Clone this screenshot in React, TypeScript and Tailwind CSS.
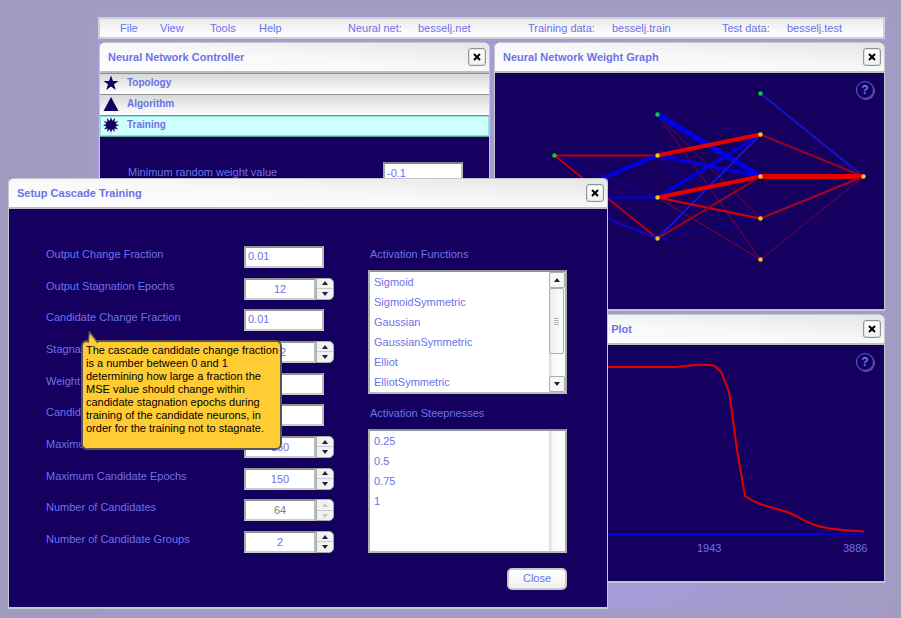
import type { ReactNode } from "react";

function CloseButton({ label }: { label: string }) {
  return (
    <button
      type="button"
      aria-label={label}
      className="flex size-[18px] shrink-0 items-center justify-center rounded-[3px] border border-[#8f9797] bg-gradient-to-b from-white to-[#f0f0f0] shadow-[inset_0_0_0_1px_#dfe3e3]"
    >
      <svg viewBox="0 0 8 8" className="size-2" stroke="#000" strokeWidth="2" fill="none">
        <path d="M1 1 L7 7 M7 1 L1 7" />
      </svg>
    </button>
  );
}

function Panel({
  title,
  children,
  className = "",
}: {
  title: string;
  children: ReactNode;
  className?: string;
}) {
  return (
    <section
      className={`flex flex-col rounded-t border-x border-b-2 border-[#c3c8cc] bg-[#150060] ${className}`}
    >
      <header className="flex h-[31px] shrink-0 items-center justify-between rounded-t border-t border-b-2 border-t-[#c3c8cc] border-b-[#b9c0c4] bg-gradient-to-bl from-[#e6e6e6] via-[#f8f8f8] to-white pr-[3px] pl-2">
        <h2 className="text-[11px] leading-4 font-bold text-[#6b73e8]">{title}</h2>
        <CloseButton label={`Close ${title}`} />
      </header>
      {children}
    </section>
  );
}

function HelpButton() {
  return (
    <button
      type="button"
      aria-label="Help"
      className="absolute top-2 right-[10px] flex size-[18px] items-center justify-center rounded-full border border-[#5a63d8] text-xs leading-4 font-bold text-[#6b7bf0] shadow-[1px_1px_0_#5a5a80]"
    >
      ?
    </button>
  );
}

const sections = [
  {
    name: "Topology",
    icon: "M8 0.5 L10 6 L15.5 6 L11 9.3 L12.8 15 L8 11.5 L3.2 15 L5 9.3 L0.5 6 L6 6 Z",
    active: false,
  },
  { name: "Algorithm", icon: "M8 1 L15.5 15 L0.5 15 Z", active: false },
  {
    name: "Training",
    icon: "M8 0 L9.2 4 L12 1.1 L11.5 5 L15.2 4 L12.5 7 L16 8.2 L12.5 9.4 L15 12.4 L11.3 11.4 L11.8 15 L9.2 12.3 L8 16 L6.8 12.3 L4 15 L4.6 11.4 L0.8 12.4 L3.5 9.4 L0 8.2 L3.5 7 L0.8 4 L4.5 5 L4 1.1 L6.8 4 Z",
    active: true,
  },
];

function Controller() {
  return (
    <Panel title="Neural Network Controller">
      <nav>
        {sections.map((s) => (
          <button
            key={s.name}
            type="button"
            className={`flex h-[21px] w-full items-start gap-2 border-t pt-px pl-[3px] text-[10px] leading-4 font-bold text-[#6b73e8] ${
              s.active
                ? "border-[#5b9f8f] bg-[#cffffd] shadow-[inset_0_0_0_1px_#8fe0d8]"
                : "border-[#8b8f90] bg-gradient-to-b from-[#d6d9d9] to-white"
            }`}
          >
            <svg viewBox="0 0 16 16" className="size-4" fill="#150060">
              <path d={s.icon} />
            </svg>
            {s.name}
          </button>
        ))}
      </nav>
      <div className="flex items-start justify-between border-t border-[#5b9f8f] pt-[25px] pr-[26px] pl-[28px] text-[11px] leading-4 text-[#6b73e8]">
        <label htmlFor="min-weight" className="pt-0.5">
          Minimum random weight value
        </label>
        <input
          id="min-weight"
          defaultValue="-0.1"
          className="h-[22px] w-20 border-2 border-t-[#7f8584] border-r-[#b9bdbd] border-b-[#c9cdcd] border-l-[#a5abab] bg-white px-0.5"
        />
      </div>
    </Panel>
  );
}

type Edge = [number, number, number, number, string, number];

const edges: Edge[] = [
  [554, 155, 657, 197, "#0b06a8", 1],
  [657, 114, 760, 134, "#160290", 1],
  [657, 155, 760, 218, "#160290", 1],
  [657, 155, 760, 259, "#160290", 1],
  [657, 238, 760, 218, "#0c04a8", 1],
  [657, 238, 760, 259, "#160290", 1],
  [657, 114, 760, 218, "#72063c", 1],
  [657, 114, 760, 259, "#7a0638", 1],
  [657, 197, 760, 259, "#8a0430", 1],
  [760, 259, 863, 176, "#6c0844", 1],
  [554, 155, 657, 155, "#b50018", 2],
  [554, 155, 657, 238, "#b50018", 2],
  [554, 197, 657, 155, "#0000e8", 4],
  [554, 197, 657, 197, "#0000e8", 2],
  [554, 197, 657, 238, "#0a08c8", 2],
  [657, 114, 760, 176, "#0000e8", 5],
  [657, 155, 760, 176, "#0000e8", 3],
  [657, 197, 760, 134, "#0000e8", 3],
  [657, 238, 760, 134, "#1414d0", 2],
  [657, 155, 760, 134, "#e60000", 4],
  [657, 197, 760, 176, "#e60000", 4],
  [657, 197, 760, 218, "#d80008", 2],
  [657, 238, 760, 176, "#a8001c", 2],
  [760, 93, 863, 176, "#1414c8", 2],
  [760, 134, 863, 176, "#96002a", 2],
  [760, 176, 863, 176, "#e60000", 5],
  [760, 218, 863, 176, "#a80020", 2],
];

const nodes: [number, number, string][] = [
  [554, 155, "#00d820"],
  [657, 114, "#00d820"],
  [760, 93, "#00d820"],
  [657, 155, "#e8c820"],
  [657, 197, "#e8c820"],
  [657, 238, "#e8c820"],
  [760, 134, "#e8c820"],
  [760, 176, "#e8c820"],
  [760, 218, "#e8c820"],
  [760, 259, "#e8c820"],
  [863, 176, "#e8c820"],
];

function WeightGraph() {
  return (
    <Panel title="Neural Network Weight Graph">
      <div className="relative">
        <svg viewBox="495 73 389 236" className="block w-full">
          <g transform="translate(0.5 0.5)">
            {edges.map(([x1, y1, x2, y2, stroke, w], i) => (
              <line key={i} x1={x1} y1={y1} x2={x2} y2={y2} stroke={stroke} strokeWidth={w} />
            ))}
            {nodes.map(([cx, cy, fill], i) => (
              <circle key={i} cx={cx} cy={cy} r="2.2" fill={fill} />
            ))}
          </g>
        </svg>
        <HelpButton />
      </div>
    </Panel>
  );
}

function ErrorPlot() {
  return (
    <Panel title="Mean Squared Error Plot">
      <div className="relative">
        <svg viewBox="495 345 389 236" className="block w-full">
          <path d="M520 534 H866" stroke="#0000d8" strokeWidth="2" />
          <path
            d="M520 367 H676 L690 365.5 Q705 364 714 365.5 L721 371.5 L729 392 L731 405 L737 450 L745 496 Q752 501 761 504.5 Q770 507 779 509.5 Q789 512 797 516.5 Q808 523 818 526 Q832 530 864 531.5"
            fill="none"
            stroke="#e00000"
            strokeWidth="2"
          />
          <g fill="#6b73e8" className="text-[11px]">
            <text x="697" y="552">
              1943
            </text>
            <text x="843" y="552">
              3886
            </text>
          </g>
        </svg>
        <HelpButton />
      </div>
    </Panel>
  );
}

function Arrow({ up, muted }: { up?: boolean; muted?: boolean }) {
  return (
    <svg viewBox="0 0 6 4" className="h-1 w-1.5" fill={muted ? "#c4c8c8" : "#1c2433"}>
      <path d={up ? "M3 0 L6 4 H0 Z" : "M0 0 H6 L3 4 Z"} />
    </svg>
  );
}

type Field = {
  id: string;
  label: string;
  value: string;
  stepper?: boolean;
  disabled?: boolean;
  tip?: boolean;
};

const fields: Field[] = [
  { id: "out-change", label: "Output Change Fraction", value: "0.01" },
  { id: "out-stagnation", label: "Output Stagnation Epochs", value: "12", stepper: true },
  { id: "cand-change", label: "Candidate Change Fraction", value: "0.01", tip: true },
  { id: "cand-stagnation", label: "Stagnation Epochs", value: "12", stepper: true },
  { id: "weight", label: "Weight Multiplier", value: "0.4" },
  { id: "cand-limit", label: "Candidate Limit", value: "1000" },
  { id: "max-out", label: "Maximum Out Epochs", value: "150", stepper: true },
  { id: "max-cand", label: "Maximum Candidate Epochs", value: "150", stepper: true },
  { id: "num-cand", label: "Number of Candidates", value: "64", stepper: true, disabled: true },
  { id: "num-groups", label: "Number of Candidate Groups", value: "2", stepper: true },
];

function Tip() {
  return (
    <div
      role="tooltip"
      className="absolute top-[31px] left-[35px] z-10 h-[110px] w-[201px] rounded-md border-2 border-[#565656] bg-[#ffcc33] px-[3px] pt-0.5 text-[11px] leading-[13px] whitespace-nowrap text-black"
    >
      <svg viewBox="0 0 12 12" className="absolute -top-[11px] left-1 h-3 w-3">
        <path d="M1 12 L2.5 1 L11 12" fill="#ffcc33" stroke="#565656" strokeWidth="1.5" />
      </svg>
      The cascade candidate change fraction
      <br />
      is a number between 0 and 1
      <br />
      determining how large a fraction the
      <br />
      MSE value should change within
      <br />
      candidate stagnation epochs during
      <br />
      training of the candidate neurons, in
      <br />
      order for the training not to stagnate.
    </div>
  );
}

function FieldRow({ field }: { field: Field }) {
  const { id, label, value, stepper, disabled, tip } = field;
  return (
    <div className="relative flex h-[22px] items-start">
      <label htmlFor={id} className="w-[198px]">
        {label}
      </label>
      <input
        id={id}
        defaultValue={value}
        disabled={disabled}
        className={`h-[22px] border-2 border-t-[#8f9594] border-r-[#b9bdbd] border-b-[#c9cdcd] border-l-[#a5abab] bg-white px-0.5 ${
          stepper ? "w-[72px] text-center" : "w-20 pb-0.5"
        } ${disabled ? "text-[#808080]" : ""}`}
      />
      {stepper && (
        <div className="flex h-[22px] w-[18px] flex-col overflow-hidden rounded-r-[5px] border border-[#a9afaf] bg-[#f2f2f2]">
          <button
            type="button"
            aria-label={`Increase ${label}`}
            disabled={disabled}
            className="flex flex-1 items-center justify-center border-b border-[#c9cdcd]"
          >
            <Arrow up muted={disabled} />
          </button>
          <button
            type="button"
            aria-label={`Decrease ${label}`}
            disabled={disabled}
            className="flex flex-1 items-center justify-center"
          >
            <Arrow muted={disabled} />
          </button>
        </div>
      )}
      {tip && <Tip />}
    </div>
  );
}

function ListBox({ title, items, scroll }: { title: string; items: string[]; scroll?: boolean }) {
  return (
    <div className="flex flex-col gap-2">
      <h3 className="pl-0.5">{title}</h3>
      <div className="flex h-[124px] border-2 border-t-[#8f9594] border-r-[#a9afaf] border-b-[#b9bdbd] border-l-[#a9afaf] bg-white">
        <ul role="listbox" aria-label={title} className="flex-1 overflow-hidden pl-1 leading-5">
          {items.map((item) => (
            <li key={item} role="option" aria-selected="false">
              {item}
            </li>
          ))}
        </ul>
        <div className="flex w-4 flex-col bg-gradient-to-r from-[#dadada] via-[#f8f8f8] via-25% to-white">
          {scroll && (
            <>
              <button
                type="button"
                aria-label="Scroll up"
                className="flex h-4 items-center justify-center rounded-[2px] border border-[#a9afaf] bg-[#f6f6f6]"
              >
                <Arrow up />
              </button>
              <div className="flex h-[66px] w-[15px] flex-col items-center justify-center gap-px rounded-[2px] border border-[#a9afaf] bg-gradient-to-r from-[#ececec] to-white">
                <span className="h-px w-[5px] bg-[#b0b5b5]" />
                <span className="h-px w-[5px] bg-[#b0b5b5]" />
                <span className="h-px w-[5px] bg-[#b0b5b5]" />
                <span className="h-px w-[5px] bg-[#b0b5b5]" />
              </div>
              <button
                type="button"
                aria-label="Scroll down"
                className="mt-auto flex h-4 items-center justify-center rounded-[2px] border border-[#a9afaf] bg-[#f6f6f6]"
              >
                <Arrow />
              </button>
            </>
          )}
        </div>
      </div>
    </div>
  );
}

function CascadeDialog() {
  return (
    <Panel title="Setup Cascade Training" className="absolute top-[178px] left-2 w-[600px]">
      <div className="flex flex-col gap-[15px] pt-[37px] pr-10 pb-[17px] pl-[37px] text-[11px] leading-4 text-[#6b73e8]">
        <div className="flex justify-between">
          <div className="flex flex-col justify-between">
            {fields.map((f) => (
              <FieldRow key={f.id} field={f} />
            ))}
          </div>
          <div className="flex w-[199px] flex-col gap-[11px]">
            <ListBox
              title="Activation Functions"
              scroll
              items={[
                "Sigmoid",
                "SigmoidSymmetric",
                "Gaussian",
                "GaussianSymmetric",
                "Elliot",
                "ElliotSymmetric",
              ]}
            />
            <ListBox title="Activation Steepnesses" items={["0.25", "0.5", "0.75", "1"]} />
          </div>
        </div>
        <button
          type="button"
          className="flex h-[22px] w-[60px] items-start justify-center self-end rounded-[5px] border-2 border-[#c3c8c8] bg-gradient-to-b from-white to-[#f0f0f0]"
        >
          Close
        </button>
      </div>
    </Panel>
  );
}

function MenuBar() {
  return (
    <header className="flex h-[22px] items-center border-2 border-[#cfd0d4] bg-gradient-to-b from-[#ececec] to-white pl-5 text-[11px] leading-4 whitespace-nowrap text-[#6b73e8]">
      <button type="button" className="w-10 text-left">File</button>
      <button type="button" className="w-[50px] text-left">View</button>
      <button type="button" className="w-[49px] text-left">Tools</button>
      <button type="button" className="w-[89px] text-left">Help</button>
      <span className="w-[70px]">Neural net:</span>
      <span className="w-[110px]">besselj.net</span>
      <span className="w-[84px]">Training data:</span>
      <span className="w-[110px]">besselj.train</span>
      <span className="w-[65px]">Test data:</span>
      <span>besselj.test</span>
    </header>
  );
}

export default function App() {
  return (
    <div className="relative min-h-screen bg-[#a29bc1] pt-[17px] pr-4 pb-[9px] pl-[98px] font-['Liberation_Sans',Arial,sans-serif]">
      <div className="bg-gradient-to-br from-[#a59bd6] from-85% to-[#a29bc1] pb-[26px] shadow-[0_0_8px_2px_#a59bce]">
        <MenuBar />
        <main className="grid grid-cols-2 gap-1 pt-[3px] pl-px">
          <Controller />
          <div className="flex flex-col gap-[3px]">
            <WeightGraph />
            <ErrorPlot />
          </div>
        </main>
      </div>
      <CascadeDialog />
    </div>
  );
}
